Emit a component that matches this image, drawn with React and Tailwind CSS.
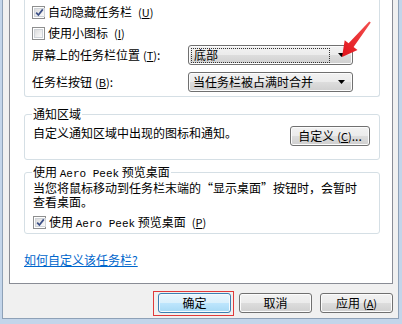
import React from 'react';

const cjk = "font-['Noto_Sans_CJK_SC',sans-serif]";
const btnFace =
  'bg-[linear-gradient(#f2f2f2,#ebebeb_50%,#dddddd_50%,#cfcfcf)] border border-[#707070] rounded-[3px] shadow-[inset_0_0_0_1px_#fcfcfc]';

const Key = ({ k }) => (
  <span className="ml-[3px] text-[11px]">
    (<u>{k}</u>)
  </span>
);

const CheckBox = ({ checked }) => (
  <span className="w-[13px] h-[13px] shrink-0 border border-[#8e8f8f] bg-white p-[1px] flex">
    <span className="flex-1 border border-[#cfd3d8] bg-[linear-gradient(135deg,#dcdcdc,#fbfbfb)] flex items-center justify-center">
      {checked && (
        <svg width="9" height="9" viewBox="0 0 9 9">
          <path d="M1.2 4.6 L3.4 7 L7.8 1.4" fill="none" stroke="#3b4f86" strokeWidth="1.7" />
        </svg>
      )}
    </span>
  </span>
);

const Combo = ({ text, focused }) => (
  <div className={`w-[165px] h-[20px] ${btnFace} flex items-center pl-[2px] pr-[7px]`}>
    <div
      className={`flex-1 h-[15px] flex items-center pl-[2px] ${
        focused ? 'border border-dotted border-[#333]' : ''
      }`}
    >
      {text}
    </div>
    <svg width="7" height="4" viewBox="0 0 7 4" className="ml-[8px]">
      <path d="M0 0 H7 L3.5 4 Z" fill="#000" />
    </svg>
  </div>
);

const Group = ({ title, className, children }) => (
  <div className={`relative ml-[14px] mr-[12px] border border-[#d5dfe5] rounded-[3px] ${className}`}>
    <span className="absolute -top-[8px] left-[7px] bg-white px-[1px] leading-[14px]">{title}</span>
    {children}
  </div>
);

const Mono = ({ children }) => (
  <span className="font-['Liberation_Mono',monospace] text-[11px]">{children}</span>
);

export default function App() {
  return (
    <div className={`relative w-[402px] h-[324px] bg-[#c3d5ea] pr-[3px] pb-[5px] text-[12px] text-black ${cjk}`}>
      <div className="h-full ml-[2px] bg-[#f0f0f0] border-l border-r border-b border-[#8ea1b7] pl-[6px] pr-[5px] flex flex-col">
        {/* tab page */}
        <div className="h-[284px] bg-white border-l border-r border-b border-[#898c95]">
          {/* taskbar appearance (top is scrolled off) */}
          <div className="ml-[14px] mr-[12px] border-l border-r border-b border-[#d5dfe5] rounded-b-[3px] pt-[4px] pb-[4px] pl-[7px] flex flex-col">
            <div className="h-[16px] flex items-center gap-[3px]">
              <CheckBox checked />
              <span className="leading-[14px]">自动隐藏任务栏</span>
              <Key k="U" />
            </div>
            <div className="h-[16px] mt-[5px] flex items-center gap-[3px]">
              <CheckBox />
              <span className="leading-[14px]">使用小图标</span>
              <Key k="I" />
            </div>
            <div className="h-[20px] mt-[4px] flex items-center">
              <span className="w-[156px] leading-[14px]">
                屏幕上的任务栏位置<Key k="T" />:
              </span>
              <Combo text="底部" focused />
            </div>
            <div className="h-[20px] mt-[7px] flex items-center">
              <span className="w-[156px] leading-[14px]">
                任务栏按钮<Key k="B" />:
              </span>
              <Combo text="当任务栏被占满时合并" />
            </div>
          </div>

          <Group title="通知区域" className="mt-[17px] pt-[11px] pb-[13px] pl-[8px] pr-[9px]">
            <div className="flex justify-between items-start">
              <span className="leading-[14px]">自定义通知区域中出现的图标和通知。</span>
              <button className={`w-[80px] h-[20px] ${btnFace} flex items-center justify-center leading-[14px]`}>
                自定义<Key k="C" />...
              </button>
            </div>
          </Group>

          <Group
            title={
              <>
                使用 <Mono>Aero Peek</Mono> 预览桌面
              </>
            }
            className="mt-[12px] pt-[8px] pb-[3px] pl-[8px]"
          >
            <p className="leading-[14px]">
              当您将鼠标移动到任务栏末端的“显示桌面”按钮时，会暂时
              <br />
              查看桌面。
            </p>
            <div className="h-[15px] mt-[6px] flex items-center gap-[3px]">
              <CheckBox checked />
              <span className="leading-[14px]">
                使用 <Mono>Aero Peek</Mono> 预览桌面
              </span>
              <Key k="P" />
            </div>
          </Group>

          <a className="block w-fit mt-[19px] ml-[14px] leading-[14px] text-[#0066cc] underline">如何自定义该任务栏?</a>
        </div>

        {/* dialog buttons */}
        <div className="mt-[9px] flex justify-end gap-[8px]">
          <div className="relative">
            <button className="w-[73px] h-[20px] border border-[#3c7fb1] rounded-[3px] bg-[linear-gradient(#eaf6fd,#d9f0fc_50%,#bee6fd_50%,#a7d9f5)] shadow-[inset_0_0_0_1px_#f4fbff] leading-[14px]">
              确定
            </button>
            <span className="absolute -left-[5px] -right-[3px] -top-[2px] -bottom-[3px] border border-[#e03a3a]" />
          </div>
          <button className={`w-[73px] h-[20px] ${btnFace} leading-[14px]`}>取消</button>
          <button className={`w-[73px] h-[20px] ${btnFace} leading-[14px]`}>
            应用<Key k="A" />
          </button>
        </div>
      </div>

      {/* red annotation arrow */}
      <svg className="absolute left-0 top-0 pointer-events-none" width="402" height="324">
        <defs>
          <linearGradient id="ar" x1="0" y1="1" x2="1" y2="0">
            <stop offset="0" stopColor="#e0121a" />
            <stop offset="1" stopColor="#f4504f" />
          </linearGradient>
        </defs>
        <polygon
          points="342,57 357.5,50 353.6,47 370.8,22.6 369.2,21.4 348.6,43.2 344.7,40.2"
          fill="url(#ar)"
        />
      </svg>
    </div>
  );
}
